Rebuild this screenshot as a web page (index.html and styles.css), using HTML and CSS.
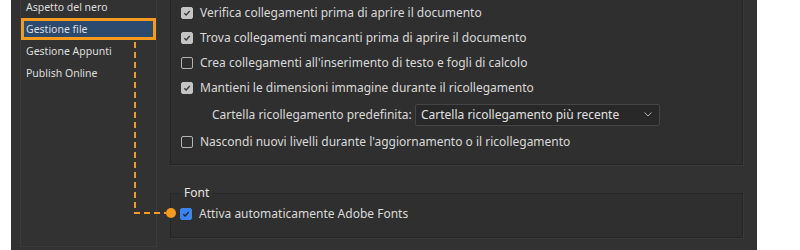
FILE: index.html
```html
<!DOCTYPE html>
<html lang="it">
<head>
    <meta charset="UTF-8">
    <meta name="viewport" content="width=device-width, initial-scale=1.0">
    <link rel="stylesheet" href="styles.css">
</head>
<body>
    <div class="prefs">
        <nav class="sidebar">
            <div class="item">Aspetto del nero</div>
            <div class="item selected">Gestione file</div>
            <div class="item">Gestione Appunti</div>
            <div class="item">Publish Online</div>
        </nav>

        <div class="content">
            <div class="group links">
                <label class="row"><span class="box checked"><svg viewBox="0 0 12 12"><path d="M2.8 6.2 L5 8.4 L9.3 3.6"/></svg></span>Verifica collegamenti prima di aprire il documento</label>
                <label class="row"><span class="box checked"><svg viewBox="0 0 12 12"><path d="M2.8 6.2 L5 8.4 L9.3 3.6"/></svg></span>Trova collegamenti mancanti prima di aprire il documento</label>
                <label class="row"><span class="box"></span>Crea collegamenti all'inserimento di testo e fogli di calcolo</label>
                <label class="row"><span class="box checked"><svg viewBox="0 0 12 12"><path d="M2.8 6.2 L5 8.4 L9.3 3.6"/></svg></span>Mantieni le dimensioni immagine durante il ricollegamento</label>
                <div class="row select-row">
                    <span class="select-label">Cartella ricollegamento predefinita:</span>
                    <div class="select">
                        <span>Cartella ricollegamento più recente</span>
                        <svg class="chevron" viewBox="0 0 8 5"><path d="M0.5 0.5 L4 4 L7.5 0.5"/></svg>
                    </div>
                </div>
                <label class="row"><span class="box"></span>Nascondi nuovi livelli durante l'aggiornamento o il ricollegamento</label>
            </div>

            <fieldset class="group fonts">
                <legend>Font</legend>
                <label class="row"><span class="box checked blue"><svg viewBox="0 0 12 12"><path d="M2.8 6.2 L5 8.4 L9.3 3.6"/></svg></span>Attiva automaticamente Adobe Fonts</label>
            </fieldset>
        </div>
    </div>

    <!-- callout from the selected page to the option -->
    <svg class="callout" width="800" height="250" viewBox="0 0 800 250">
        <path d="M135 42 V213 H166" />
        <circle cx="171" cy="213" r="5" />
    </svg>
</body>
</html>
```

FILE: styles.css
```css
body {
    margin: 0;
    background: #ffffff;
    font-family: "Noto Sans", "Open Sans", sans-serif;
    overflow: hidden;
    position: relative;
    height: 250px;
}

.prefs {
    display: flex;
    align-items: flex-start;
    width: 746px;
    height: 280px;
    margin: -30px 0 0 11px;
    background: #323232;
    color: #d9d9d9;
}

/* left list of preference pages */
.sidebar {
    box-sizing: border-box;
    width: 137px;
    height: 277px;
    margin-left: 9px;
    padding-top: 25px;
    border: 1px solid #3b3b3b;
    font-size: 10.5px;
}

.item {
    height: 22px;
    line-height: 22px;
    padding-left: 5px;
    color: #dedede;
}

.item.selected {
    background: #2c4a6e;
    box-shadow: inset 0 0 0 3px #f49a1e;
}

.content {
    width: 573px;
    margin-left: 13px;
    font-size: 12px;
}

.group {
    box-sizing: border-box;
    border: 1px solid #262626;
    box-shadow: 1px 1px 0 #3a3a3a;
    background: #2f2f2f;
}

.links {
    padding: 29px 10px 10px 10px;
}

.fonts {
    margin: 20px 0 0 0;
    padding: 0 10px 11px 9px;
    min-width: 0;
}

.fonts legend {
    padding: 0 4px;
    line-height: 16px;
    color: #e4e4e4;
}

.row {
    display: flex;
    align-items: center;
    height: 25px;
    white-space: nowrap;
}

.box {
    box-sizing: border-box;
    width: 12px;
    height: 12px;
    margin-right: 7px;
    border: 1px solid #b4b4b4;
    border-radius: 2px;
    flex: none;
}

.box svg {
    display: block;
    width: 10px;
    height: 10px;
}

.box svg path {
    fill: none;
    stroke: #3a3a3a;
    stroke-width: 1.6;
}

.box.checked {
    background: #c4c4c4;
    border-color: #c4c4c4;
}

.box.blue {
    background: #3a84f0;
    border-color: #3a84f0;
}

.box.blue svg path {
    stroke: #15243a;
}

.select-row {
    height: 29px;
}

.select-label {
    margin-left: 31px;
    width: 203px;
}

.select {
    box-sizing: border-box;
    display: flex;
    align-items: center;
    justify-content: space-between;
    width: 245px;
    height: 22px;
    padding: 0 7px 0 5px;
    border: 1px solid #454545;
    border-radius: 2px;
    background: #282828;
    color: #e0e0e0;
}

.chevron {
    width: 8px;
    height: 5px;
}

.chevron path {
    fill: none;
    stroke: #b0b0b0;
    stroke-width: 1;
}

.callout {
    position: absolute;
    top: 0;
    left: 0;
    pointer-events: none;
}

.callout path {
    fill: none;
    stroke: #f49a1e;
    stroke-width: 2;
    stroke-dasharray: 6 4;
}

.callout circle {
    fill: #f49a1e;
}
```
